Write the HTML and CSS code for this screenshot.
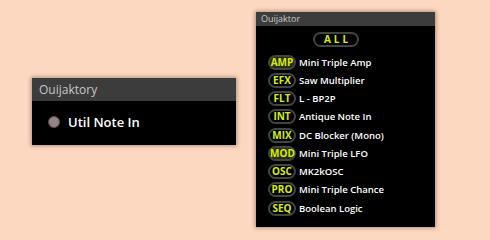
FILE: index.html
```html
<!DOCTYPE html>
<html lang="en">
<head>
    <meta charset="UTF-8">
    <title>Ouijaktory</title>
    <link rel="stylesheet" href="styles.css">
</head>
<body>
    <div class="desk">
        <div class="panel small">
            <div class="panel-head">Ouijaktory</div>
            <div class="panel-body">
                <div class="item">
                    <span class="dot"></span>
                    <span>Util Note In</span>
                </div>
            </div>
        </div>

        <div class="panel big">
            <div class="panel-head">Ouijaktor</div>
            <div class="panel-body">
                <div class="all-row"><span class="pill all">ALL</span></div>
                <ul class="list">
                    <li><span class="pill lit">AMP</span>Mini Triple Amp</li>
                    <li><span class="pill">EFX</span>Saw Multiplier</li>
                    <li><span class="pill">FLT</span>L - BP2P</li>
                    <li><span class="pill">INT</span>Antique Note In</li>
                    <li><span class="pill">MIX</span>DC Blocker (Mono)</li>
                    <li><span class="pill lit">MOD</span>Mini Triple LFO</li>
                    <li><span class="pill">OSC</span>MK2kOSC</li>
                    <li><span class="pill">PRO</span>Mini Triple Chance</li>
                    <li><span class="pill">SEQ</span>Boolean Logic</li>
                </ul>
            </div>
        </div>
    </div>
</body>
</html>
```
FILE: styles.css
```css
body {
    margin: 0;
    background-color: #fdd8c0;
    font-family: "Open Sans", sans-serif;
    width: 490px;
    height: 240px;
    overflow: hidden;
}
.desk {
    display: flex;
    align-items: flex-start;
    padding-left: 32px;
}
.panel {
    background-color: #000;
    box-shadow: 0 0 4px 1px rgba(90, 50, 30, 0.45);
}
.panel-head {
    background-color: #3c3c3c;
    color: #c8c8c8;
}
.small {
    width: 204px;
    height: 67px;
    margin-top: 78px;
}
.small .panel-head {
    height: 23px;
    line-height: 23px;
    font-size: 12px;
    padding-left: 7px;
}
.small .panel-body {
    padding: 12px 0 0 16px;
}
.item {
    display: flex;
    align-items: center;
    gap: 8px;
    color: #fff;
    font-size: 13px;
    font-weight: 600;
}
.dot {
    width: 10px;
    height: 10px;
    border-radius: 50%;
    background-color: #8a8888;
    border: 1px solid #7a3c3c;
}
.big {
    width: 179px;
    height: 215px;
    margin-top: 12px;
    margin-left: 20px;
}
.big .panel-head {
    height: 14px;
    line-height: 14px;
    font-size: 9px;
    padding-left: 5px;
}
.all-row {
    display: flex;
    justify-content: center;
    padding: 6px 19px 0 0;
}
.pill {
    display: inline-block;
    box-sizing: border-box;
    width: 28px;
    border: 2px solid #45453f;
    border-radius: 8px;
    color: #d6ee10;
    font-weight: 700;
    font-size: 10px;
    line-height: 11px;
    text-align: center;
}
.all {
    width: 46px;
    letter-spacing: 3px;
    padding-left: 3px;
}
.lit {
    background-color: #2a2e08;
}
.list {
    list-style: none;
    margin: 6px 0 0 0;
    padding: 0 0 0 12px;
}
.list li {
    display: flex;
    align-items: center;
    gap: 3px;
    height: 18.25px;
    color: #fff;
    font-size: 9.5px;
    font-weight: 600;
}
```
